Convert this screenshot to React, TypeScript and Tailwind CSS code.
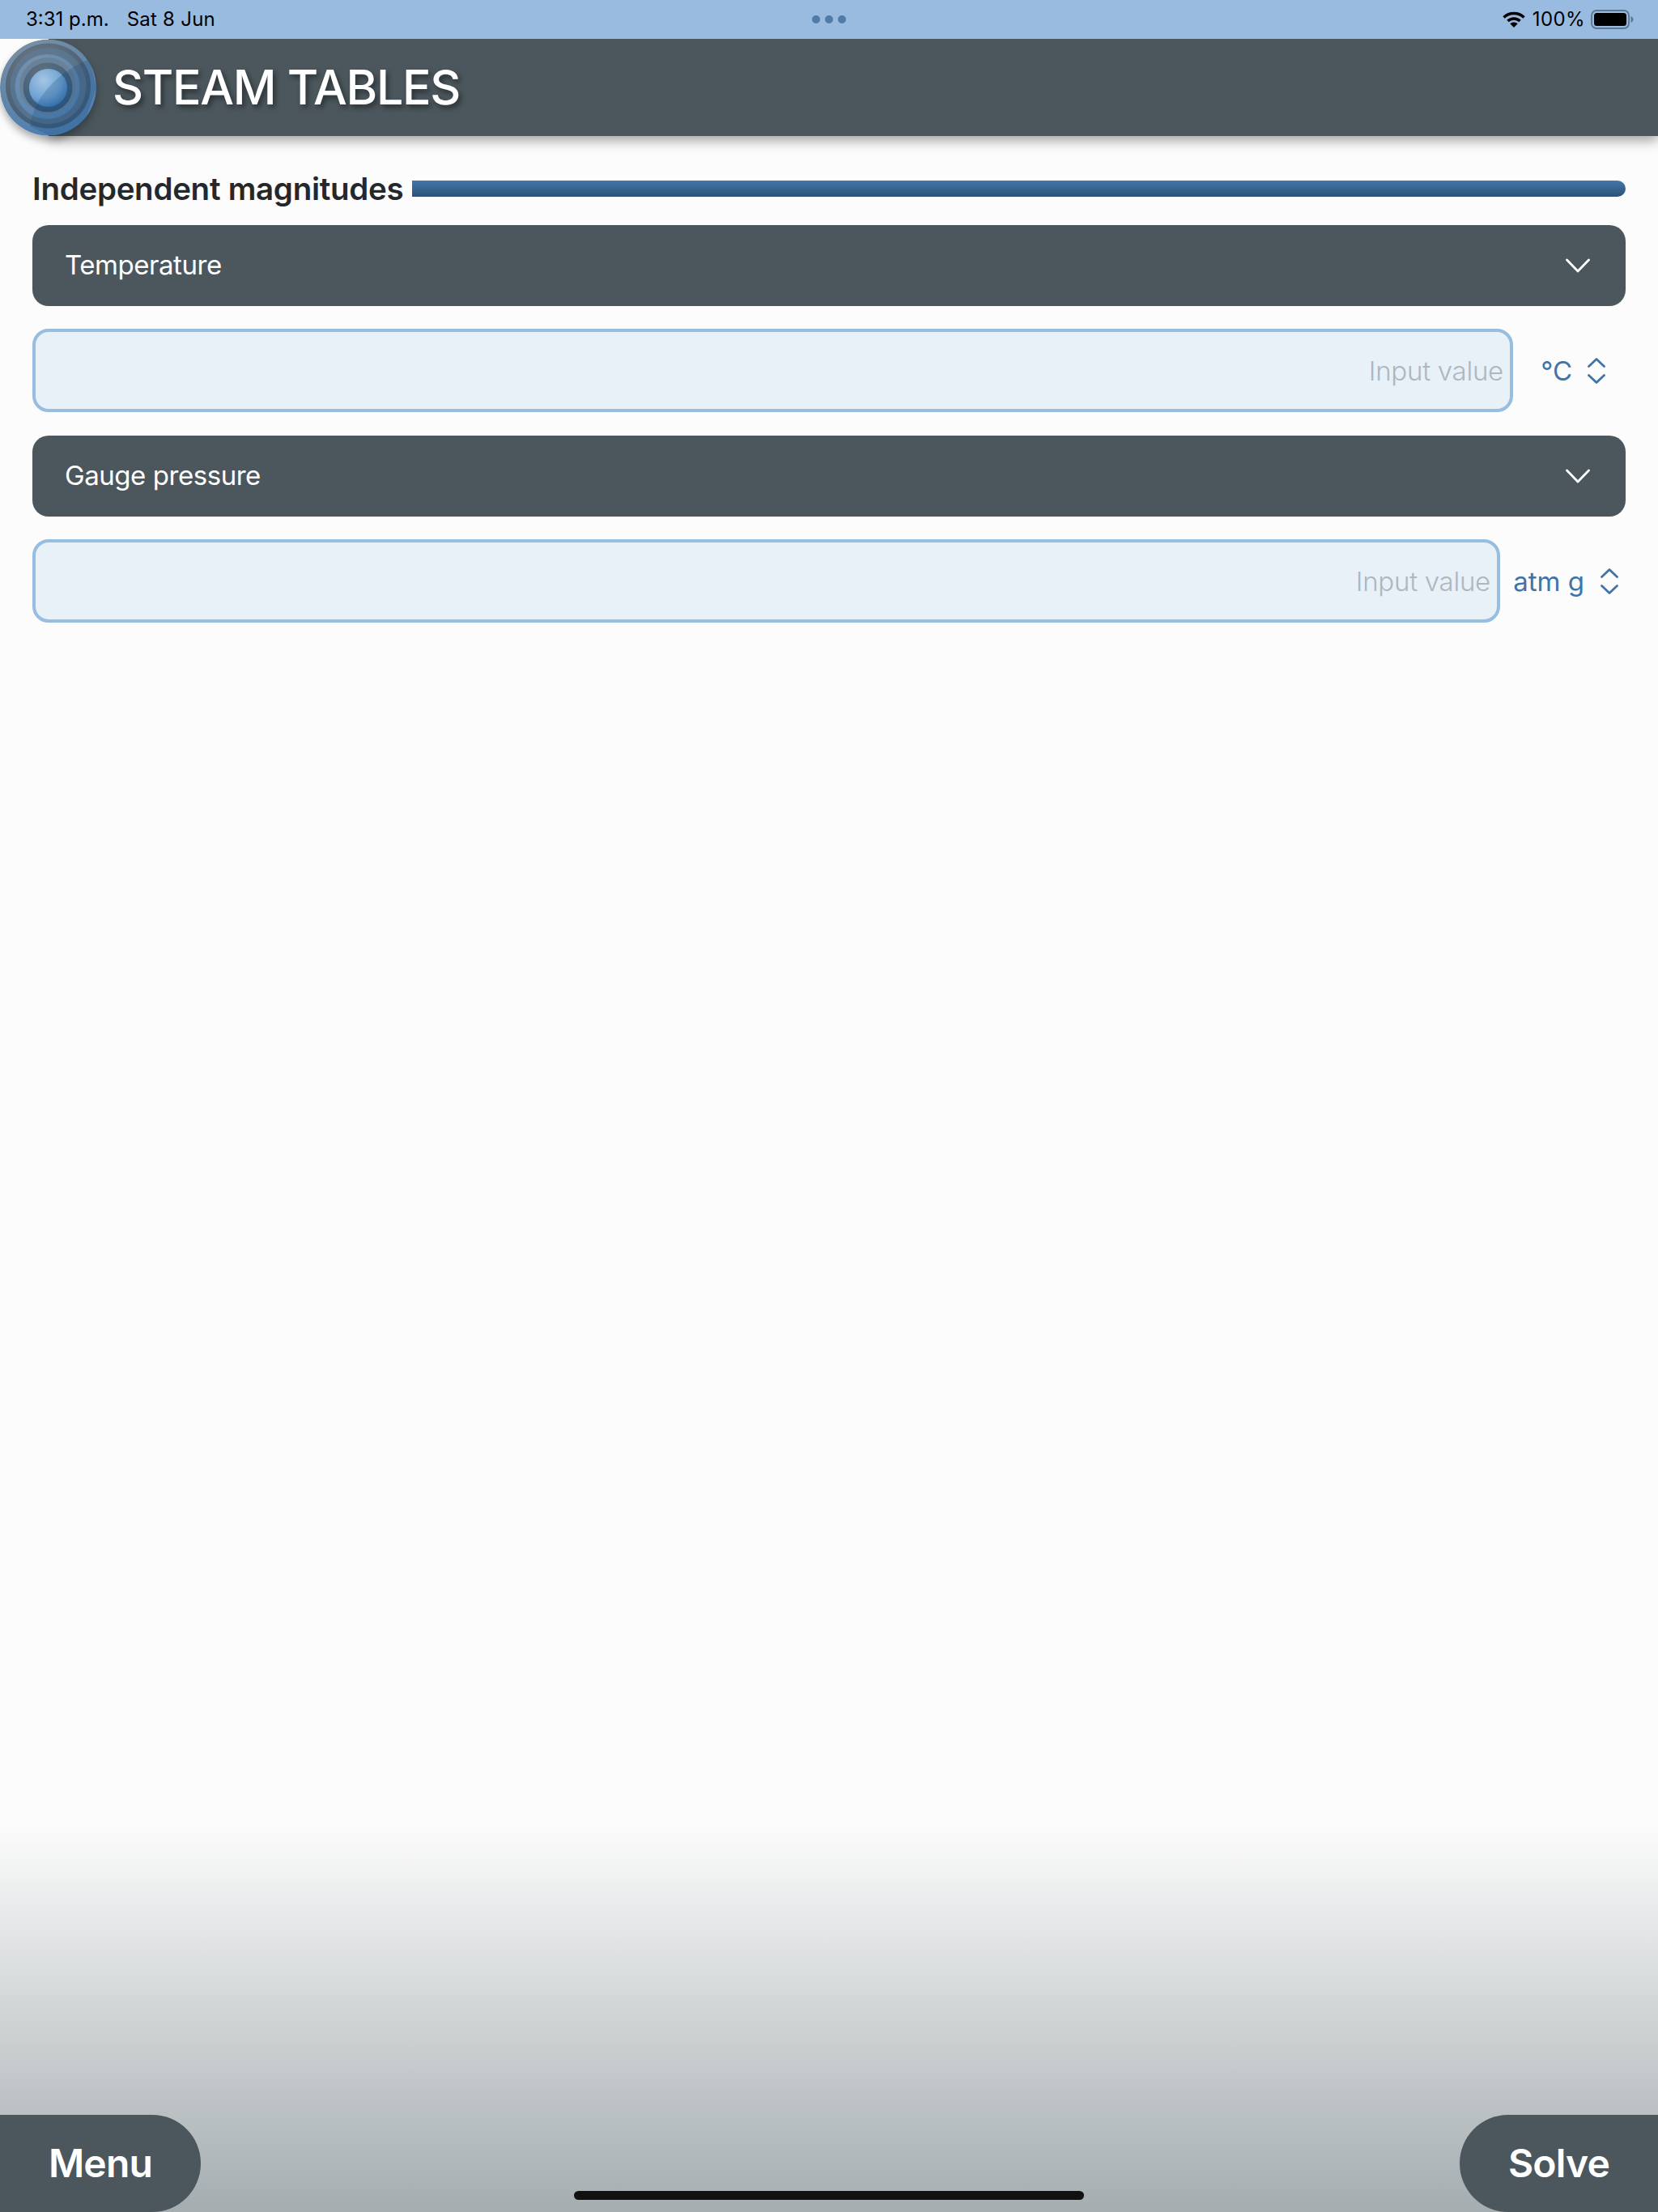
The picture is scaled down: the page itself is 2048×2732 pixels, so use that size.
import React from "react";

const font = { fontFamily: "Inter, 'Noto Sans', sans-serif" };

function Logo() {
  return (
    <svg width="119" height="120" viewBox="0 0 119 120" className="relative z-10 shrink-0 drop-shadow-[0_6px_5px_rgba(0,0,0,0.3)]">
      <defs>
        <radialGradient id="outer" cx="0.42" cy="0.3" r="0.8">
          <stop offset="0" stopColor="#8f9aa3" />
          <stop offset="0.45" stopColor="#6d8aa6" />
          <stop offset="1" stopColor="#447cb4" />
        </radialGradient>
        <radialGradient id="ring1" cx="0.4" cy="0.28" r="0.85">
          <stop offset="0" stopColor="#6f7a83" />
          <stop offset="0.6" stopColor="#4f6478" />
          <stop offset="1" stopColor="#355a80" />
        </radialGradient>
        <radialGradient id="ring2" cx="0.4" cy="0.3" r="0.8">
          <stop offset="0" stopColor="#8494a3" />
          <stop offset="1" stopColor="#4f86bb" />
        </radialGradient>
        <radialGradient id="ring3" cx="0.4" cy="0.25" r="0.85">
          <stop offset="0" stopColor="#66727d" />
          <stop offset="1" stopColor="#2b5780" />
        </radialGradient>
        <radialGradient id="ball" cx="0.38" cy="0.3" r="0.8">
          <stop offset="0" stopColor="#a6c5e3" />
          <stop offset="0.6" stopColor="#6fa3d4" />
          <stop offset="1" stopColor="#3273b2" />
        </radialGradient>
        <clipPath id="disc">
          <circle cx="59.5" cy="60" r="59.5" />
        </clipPath>
      </defs>
      <g clipPath="url(#disc)">
        <circle cx="59.5" cy="60" r="59.5" fill="url(#outer)" />
        <circle cx="59.5" cy="58" r="52.5" fill="url(#ring1)" />
        <circle cx="59.5" cy="58" r="47" fill="#5e7d9b" opacity="0.6" />
        <circle cx="58.5" cy="59" r="40" fill="url(#ring2)" />
        <circle cx="59" cy="58" r="35" fill="#6a8299" />
        <circle cx="59" cy="60" r="30.5" fill="url(#ring3)" />
        <circle cx="59.5" cy="60.5" r="23.5" fill="url(#ball)" />
        <path d="M37 108 C41 82 58 48 110 25 L119 60 L100 115 L60 119 Z" fill="#0c3f75" opacity="0.22" />
      </g>
    </svg>
  );
}

function Chevrons() {
  return (
    <svg width="22" height="32" viewBox="0 0 22 32" fill="none" stroke="#3f74a8" strokeWidth="2.8" strokeLinecap="round" strokeLinejoin="round" className="shrink-0">
      <path d="M1.5 10.5 L11 1.5 L20.5 10.5" />
      <path d="M1.5 21.5 L11 30.5 L20.5 21.5" />
    </svg>
  );
}

function Select({ label }: { label: string }) {
  return (
    <div className="flex h-[100px] items-center justify-between rounded-[20px] bg-[#4b575d] pl-[40px] pr-[44px] text-[33px] tracking-[-0.45px] text-white">
      <span>{label}</span>
      <svg width="30" height="18" viewBox="0 0 30 18" fill="none" stroke="#ffffff" strokeWidth="2.8" strokeLinecap="round" strokeLinejoin="round">
        <path d="M1.5 2 L15 16 L28.5 2" />
      </svg>
    </div>
  );
}

function Field({ unit, gap, pr }: { unit: string; gap: string; pr: string }) {
  return (
    <div className="flex h-[103px] items-center">
      <div className="flex h-full flex-1 items-center justify-end rounded-[20px] border-[4px] border-[#97bde0] bg-[#e8f0f8] pr-[8px] pt-[2px] text-[33px] font-light tracking-[-0.25px] text-[#aeb6be]">
        Input value
      </div>
      <div className={pr}>
        <span className="pt-[2px] text-[33px] leading-none text-[#3f74a8]">{unit}</span>
        <span className={gap}>
          <Chevrons />
        </span>
      </div>
    </div>
  );
}

export default function App() {
  return (
    <div className="flex h-[2732px] w-[2048px] flex-col overflow-hidden bg-[#fcfcfc]" style={font}>
      <div className="relative flex h-[48px] items-center justify-between bg-[#99bbe0] pl-[32px] pr-[30px] text-[24px] text-black">
        <div className="flex gap-[22px]">
          <span>3:31 p.m.</span>
          <span className="tracking-[0.25px]">Sat 8 Jun</span>
        </div>
        <div className="absolute left-[1003px] top-[19px] flex gap-[6px]">
          <span className="h-[10px] w-[10px] rounded-full bg-[#4f7ba5]" />
          <span className="h-[10px] w-[10px] rounded-full bg-[#4f7ba5]" />
          <span className="h-[10px] w-[10px] rounded-full bg-[#4f7ba5]" />
        </div>
        <div className="flex items-center gap-[9px]">
          <svg width="28" height="20" viewBox="0 0 28 20" fill="none" stroke="#000" strokeWidth="3.4">
            <path d="M1.5 7.5 C8.5 .8 19.5 .8 26.5 7.5" />
            <path d="M6.5 12 C10.5 8 17.5 8 21.5 12" />
            <path d="M14 20 L9.3 15.2 C12 13 16 13 18.7 15.2 Z" fill="#000" stroke="none" />
          </svg>
          <span className="tracking-[0.4px]">100%</span>
          <svg width="53" height="24" viewBox="0 0 53 24" className="-ml-[2px]">
            <rect x="1" y="1" width="46" height="22" rx="6" fill="none" stroke="#5d7691" strokeWidth="1.8" />
            <rect x="4" y="4" width="40" height="16" rx="3.5" fill="#000" />
            <path d="M49.5 8 C51.5 9 52.5 10.5 52.5 12 C52.5 13.5 51.5 15 49.5 16 Z" fill="#5d7691" />
          </svg>
        </div>
      </div>

      <div className="ml-[60px] flex h-[120px] items-center bg-[#4b575d] shadow-[0_6px_14px_rgba(0,0,0,0.35)]">
        <div className="-ml-[60px] mr-[20px]">
          <Logo />
        </div>
        <span className="text-[59px] font-medium tracking-[-1.3px] text-white [text-shadow:3px_4px_6px_rgba(0,0,0,0.45)]">
          STEAM TABLES
        </span>
      </div>

      <div className="flex flex-1 flex-col px-[40px] pt-[39px]">
        <div className="flex h-[52px] items-center gap-[11px]">
          <span className="text-[38.5px] font-semibold leading-none tracking-[-0.28px] text-[#24282b]">
            Independent magnitudes
          </span>
          <div className="h-[20px] flex-1 rounded-r-[10px] bg-gradient-to-b from-[#4476a9] to-[#2c5178]" />
        </div>
        <div className="mt-[19px] flex flex-col gap-[28px]">
          <Select label="Temperature" />
          <Field unit="°C" gap="ml-[19px]" pr="flex w-[139px] items-center justify-end pr-[25px]" />
          <div className="mt-[1px]">
            <Select label="Gauge pressure" />
          </div>
          <Field unit="atm g" gap="ml-[20px]" pr="flex w-[155px] items-center justify-end pr-[9px]" />
        </div>
      </div>

      <div className="relative flex h-[480px] items-end justify-between bg-gradient-to-b from-[#fcfcfc] to-[#a5adb0]">
        <div className="flex h-[120px] w-[248px] items-center justify-center rounded-r-[60px] bg-[#4b575d] text-[48px] font-semibold tracking-[-0.8px] text-white">
          Menu
        </div>
        <div className="flex h-[120px] w-[245px] items-center justify-center rounded-l-[60px] bg-[#4b575d] text-[48px] font-semibold tracking-[-0.8px] text-white">
          Solve
        </div>
        <div className="absolute bottom-[15px] left-[709px] h-[11px] w-[630px] rounded-full bg-[#111111]" />
      </div>
    </div>
  );
}
